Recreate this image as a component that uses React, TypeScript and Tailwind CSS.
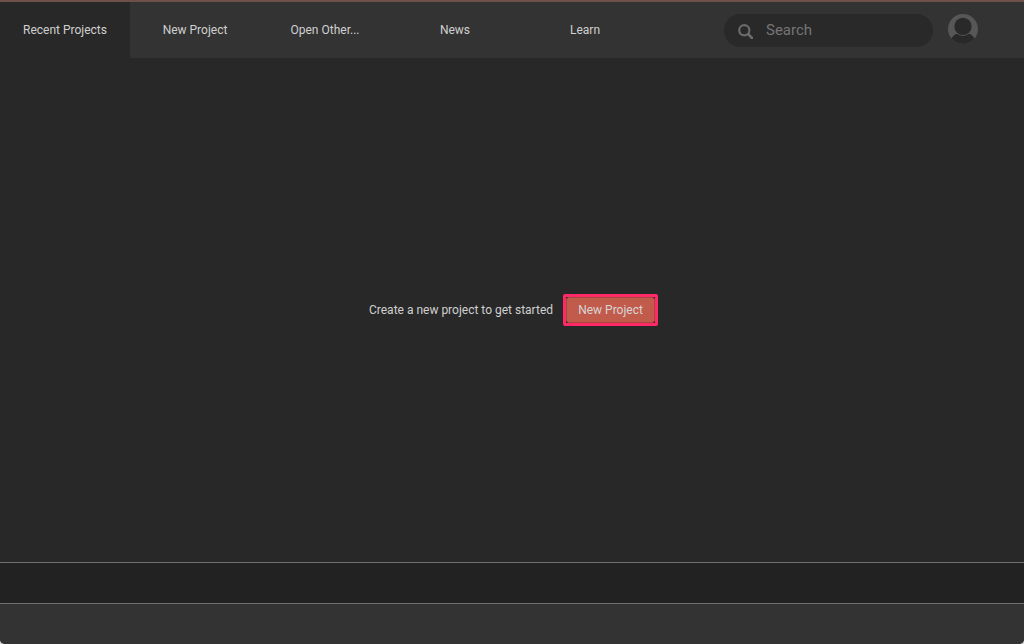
import { useState } from "react";

const tabs = ["Recent Projects", "New Project", "Open Other...", "News", "Learn"];

function SearchIcon() {
  return (
    <svg className="size-[15px] shrink-0" viewBox="0 0 15 15" fill="none" stroke="#6b6b6b" aria-hidden="true">
      <circle cx="6.3" cy="6.3" r="5.1" strokeWidth="2.2" />
      <path d="M10.2 10.2 14 14" strokeWidth="2.6" strokeLinecap="round" />
    </svg>
  );
}

function Avatar() {
  return (
    <svg className="size-[30px]" viewBox="0 0 30 30" aria-hidden="true">
      <clipPath id="avatar-clip">
        <circle cx="15" cy="15" r="15" />
      </clipPath>
      <g clipPath="url(#avatar-clip)">
        <rect width="30" height="30" fill="#575757" />
        <path d="M3 25C4.5 22.5 6.5 20.7 8.8 19.6H21.2C23.5 20.7 25.5 22.5 27 25V30H3Z" fill="#292929" />
        <circle cx="15" cy="12.6" r="9.5" fill="#575757" />
        <circle cx="15" cy="12.4" r="8.6" fill="#292929" />
      </g>
    </svg>
  );
}

export default function App() {
  const [activeTab, setActiveTab] = useState("Recent Projects");
  const [query, setQuery] = useState("");

  return (
    <div className="h-screen w-full bg-[#d0d0d0] font-['Roboto',sans-serif] text-xs text-[#d0d0d0]">
      <div className="flex h-full flex-col overflow-hidden rounded-b-[5px] border-t-2 border-[#6f5049] bg-[#282828]">
        <header className="flex h-14 shrink-0 bg-[#333333]">
          <nav className="flex">
            {tabs.map((tab) => (
              <button
                key={tab}
                type="button"
                onClick={() => setActiveTab(tab)}
                className={`w-[130px] text-center ${activeTab === tab ? "bg-[#282828]" : "bg-[#333333]"}`}
              >
                {tab}
              </button>
            ))}
          </nav>
          <div className="ml-auto flex items-start gap-[15px] pt-3 pr-[46px]">
            <label className="flex h-[33px] w-[209px] items-center gap-[13px] rounded-full bg-[#292929] px-[14px] pt-px">
              <SearchIcon />
              <input
                type="text"
                aria-label="Search"
                placeholder="Search"
                value={query}
                onChange={(e) => setQuery(e.target.value)}
                className="w-full min-w-0 bg-transparent text-[15px] text-[#d0d0d0] outline-none placeholder:text-[#757575]"
              />
            </label>
            <button type="button" aria-label="Account">
              <Avatar />
            </button>
          </div>
        </header>

        <main className="flex flex-1 items-center justify-center gap-[10px] pl-[3px]">
          <p>Create a new project to get started</p>
          <div className="rounded-[2px] border-[3px] border-[#ff2968] bg-[#282828]">
            <button
              type="button"
              className="block h-[26px] w-[89px] rounded-[3px] border border-[#a8483c] bg-[#c15b4b] text-center text-[#d6d6d6]"
            >
              New Project
            </button>
          </div>
        </main>

        <div className="h-[42px] shrink-0 border-y border-[#707070] bg-[#222222]" />
        <footer className="h-10 shrink-0 bg-[#333333]" />
      </div>
    </div>
  );
}
